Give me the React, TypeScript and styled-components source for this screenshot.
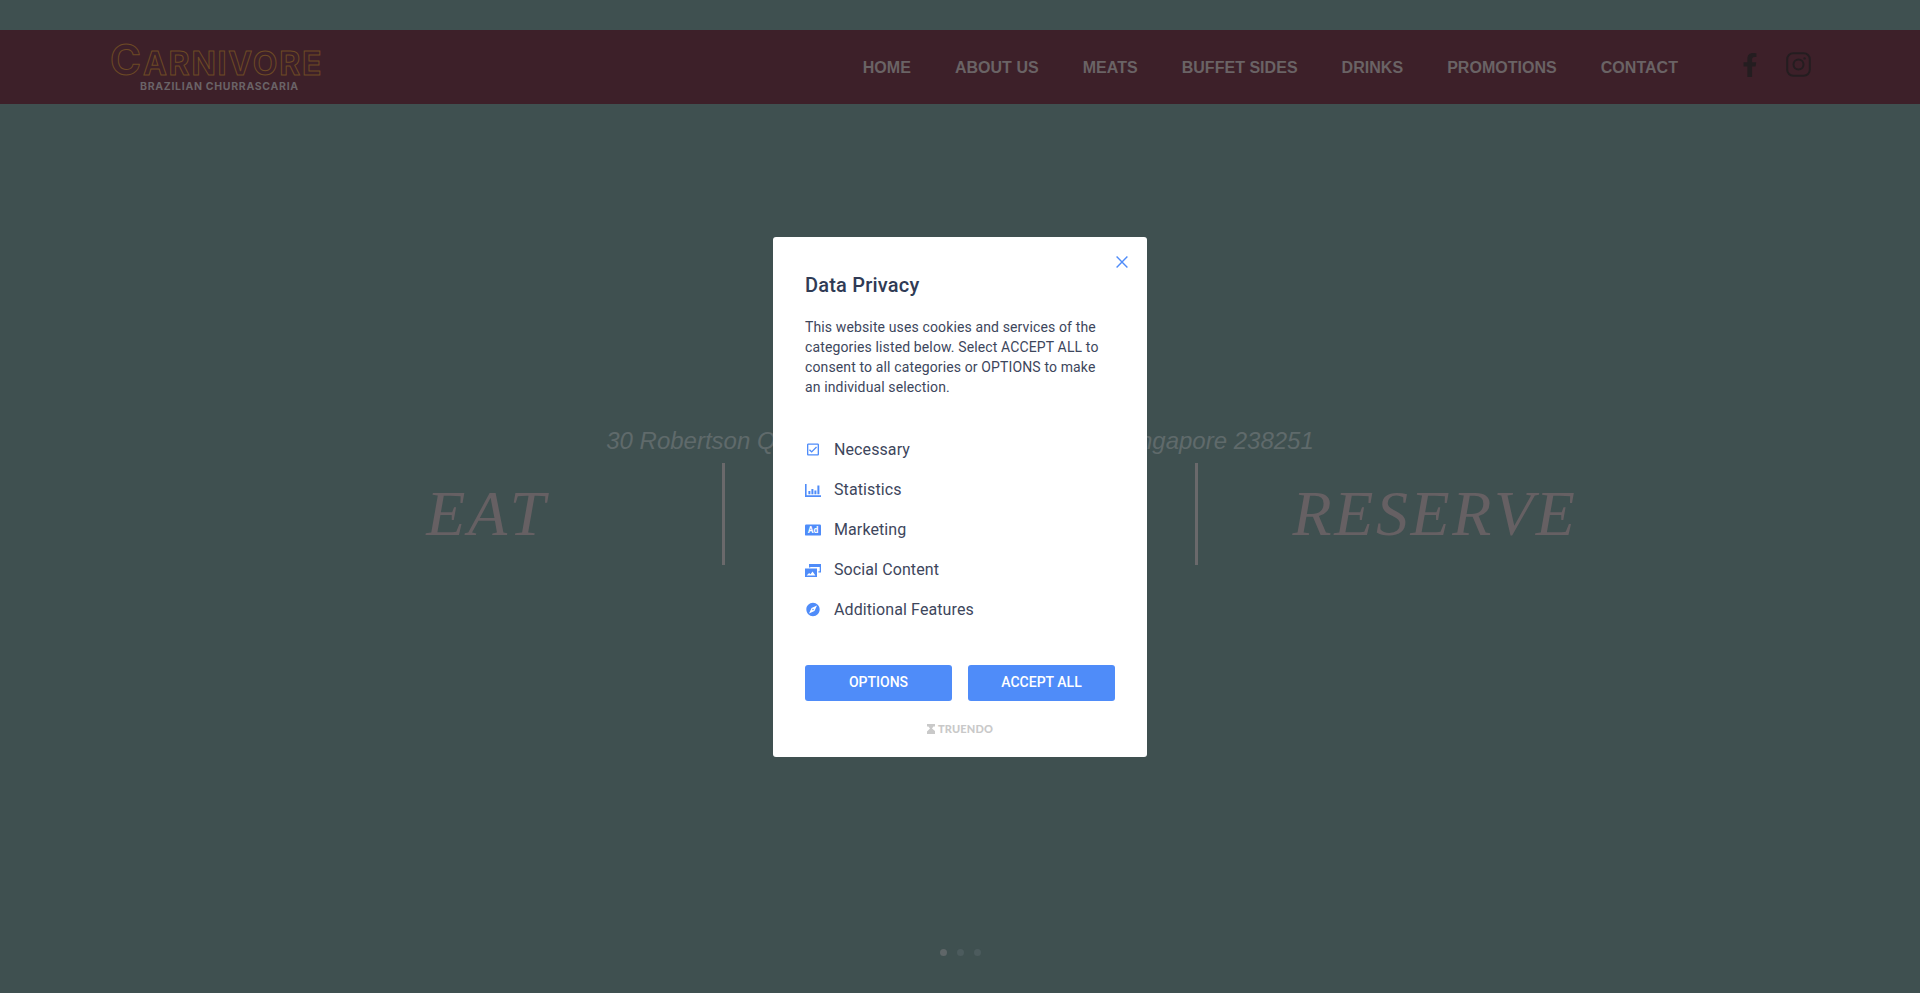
import React, { FC, ReactNode } from 'react';
import styled, { createGlobalStyle } from 'styled-components';
import { MdExplore, MdOutlineCheckBox } from 'react-icons/md';
import { FaFacebookF } from 'react-icons/fa';

const NAV_ITEMS = ['HOME', 'ABOUT US', 'MEATS', 'BUFFET SIDES', 'DRINKS', 'PROMOTIONS', 'CONTACT'];

const StatsIcon = () => (
  <svg width="16" height="16" viewBox="0 0 16 16" fill="#4f8cf9">
    <path d="M0 2h1.6v11.2H16V15H0z" />
    <path d="M3.4 9h2v3.2h-2zM6.4 7h2v5.2h-2zM9.4 8.5h2v3.7h-2zM12.4 3.5h2v8.7h-2z" />
  </svg>
);

const AdIcon = () => (
  <svg width="16" height="16" viewBox="0 0 16 16">
    <rect y="2.4" width="16" height="11.2" rx="1.2" fill="#4f8cf9" />
    <text x="8" y="11.3" textAnchor="middle" fontFamily="Roboto, sans-serif" fontSize="8.5" fontWeight="700" fill="#fff">
      Ad
    </text>
  </svg>
);

const SocialIcon = () => (
  <svg width="16" height="16" viewBox="0 0 16 16" fill="#4f8cf9">
    <path d="M4 2h12v8.5h-2.6V9.2h1.3V5H5.3v.6H4z" />
    <path d="M0 6.5h12V15H0zM1.6 13.4h8.8L7.6 9.6l-2.2 2.6-1.3-1.2z" fillRule="evenodd" />
  </svg>
);

const InstagramIcon = () => (
  <svg width="25" height="25" viewBox="0 0 25 25" fill="none" stroke="#241d20" strokeWidth="2">
    <rect x="1.2" y="1.2" width="22.6" height="22.6" rx="6" />
    <circle cx="12.5" cy="12.5" r="5" />
    <circle cx="18.6" cy="6.4" r="1.2" fill="#241d20" stroke="none" />
  </svg>
);

const TruendoMark = () => (
  <svg width="8" height="10" viewBox="0 0 8 10" fill="#c9c9c9">
    <path d="M0 0h8v2.6H6.4L5 4.4 8 7v3H0V7.4l3-2.8L1.4 2.6H0z" />
  </svg>
);

const CATEGORIES: { label: string; icon: ReactNode }[] = [
  { label: 'Necessary', icon: <MdOutlineCheckBox size={19} color="#4f8cf9" /> },
  { label: 'Statistics', icon: <StatsIcon /> },
  { label: 'Marketing', icon: <AdIcon /> },
  { label: 'Social Content', icon: <SocialIcon /> },
  { label: 'Additional Features', icon: <MdExplore size={17} color="#4f8cf9" /> },
];

const ConsentDialog: FC = () => (
  <Overlay>
    <Dialog>
      <CloseButton aria-label="Close">
        <svg width="12" height="12" viewBox="0 0 12 12" stroke="#4f8cf9" strokeWidth="1.4" fill="none">
          <path d="M.6.6l10.8 10.8M11.4.6L.6 11.4" />
        </svg>
      </CloseButton>
      <Title>Data Privacy</Title>
      <Intro>
        This website uses cookies and services of the categories listed below. Select ACCEPT ALL to consent to all
        categories or OPTIONS to make an individual selection.
      </Intro>
      <CategoryList>
        {CATEGORIES.map(({ label, icon }) => (
          <CategoryRow key={label}>
            <IconSlot>{icon}</IconSlot>
            {label}
          </CategoryRow>
        ))}
      </CategoryList>
      <Actions>
        <ActionButton>OPTIONS</ActionButton>
        <ActionButton>ACCEPT ALL</ActionButton>
      </Actions>
      <Brand>
        <TruendoMark />
        TRUENDO
      </Brand>
    </Dialog>
  </Overlay>
);

export default function App() {
  return (
    <Page>
      <GlobalStyle />
      <Header>
        <Logo>
          <LogoWord>
            <LogoInitial>C</LogoInitial>ARNIVORE
          </LogoWord>
          <LogoTag>BRAZILIAN CHURRASCARIA</LogoTag>
        </Logo>
        <Nav>
          {NAV_ITEMS.map((item) => (
            <NavLink key={item}>{item}</NavLink>
          ))}
        </Nav>
        <Social>
          <FaFacebookF size={24} color="#241d20" />
          <InstagramIcon />
        </Social>
      </Header>
      <Hero>
        <Address>30 Robertson Quay, #01-05/06, Riverside View, Singapore 238251</Address>
        <Columns>
          <Column>
            <BigWord>EAT</BigWord>
          </Column>
          <Column $divided />
          <Column>
            <BigWord>RESERVE</BigWord>
          </Column>
        </Columns>
        <Dots>
          <Dot $active />
          <Dot />
          <Dot />
        </Dots>
      </Hero>
      <ConsentDialog />
    </Page>
  );
}

const GlobalStyle = createGlobalStyle`
  html, body {
    margin: 0;
    height: 100%;
    overflow: hidden;
    background: #3f5050;
  }
`;

const Page = styled.div`
  height: 993px;
  padding-top: 30px;
  box-sizing: border-box;
  display: flex;
  flex-direction: column;
  background: #3f5050;
  font-family: 'Liberation Sans', Arial, sans-serif;
`;

const Header = styled.header`
  height: 74px;
  flex: none;
  display: flex;
  align-items: center;
  padding: 0 109px 0 110px;
  background: #3d2029;
`;

const Logo = styled.div`
  display: flex;
  flex-direction: column;
  padding-top: 2px;
`;

const LogoWord = styled.div`
  font-family: Inter, 'Liberation Sans', sans-serif;
  font-size: 32px;
  line-height: 32px;
  font-weight: 700;
  letter-spacing: 1.8px;
  color: transparent;
  -webkit-text-stroke: 1px #6d4a25;
`;

const LogoInitial = styled.span`
  font-size: 42px;
`;

const LogoTag = styled.div`
  margin: 1px 0 0 30px;
  font-family: Inter, 'Liberation Sans', sans-serif;
  font-size: 10.5px;
  line-height: 11px;
  font-weight: 700;
  letter-spacing: 0.7px;
  color: #6a6367;
`;

const Nav = styled.nav`
  margin: 1px 0 0 auto;
  display: flex;
  gap: 44px;
`;

const NavLink = styled.a`
  font-size: 16px;
  font-weight: 700;
  letter-spacing: 0.03px;
  color: #6a6365;
`;

const Social = styled.div`
  display: flex;
  align-items: center;
  gap: 24px;
  margin: -5px 0 0 60px;
`;

const Hero = styled.main`
  flex: 1;
  display: flex;
  flex-direction: column;
  align-items: center;
  padding-top: 323px;
`;

const Address = styled.p`
  margin: 0;
  font-size: 24px;
  line-height: 28px;
  font-style: italic;
  white-space: nowrap;
  color: #5f6a6b;
`;

const Columns = styled.div`
  margin-top: 8px;
  display: grid;
  grid-template-columns: 472px 476px 472px;
`;

const Column = styled.div<{ $divided?: boolean }>`
  height: 102px;
  padding-left: ${({ $divided }) => ($divided ? '0' : '2px')};
  display: flex;
  align-items: center;
  justify-content: center;
  border-left: ${({ $divided }) => ($divided ? '3px solid #6a696b' : 'none')};
  border-right: ${({ $divided }) => ($divided ? '3px solid #6a696b' : 'none')};
`;

const BigWord = styled.span`
  font-family: 'Liberation Serif', 'Times New Roman', serif;
  font-size: 64px;
  font-style: italic;
  font-kerning: none;
  letter-spacing: 2.6px;
  color: #666063;
`;

const Dots = styled.div`
  margin-top: auto;
  padding-bottom: 37px;
  display: flex;
  gap: 10px;
`;

const Dot = styled.span<{ $active?: boolean }>`
  width: 7px;
  height: 7px;
  border-radius: 50%;
  background: ${({ $active }) => ($active ? '#5f6668' : '#4c5b5d')};
`;

const Overlay = styled.div`
  position: fixed;
  inset: 0;
  display: flex;
  align-items: center;
  justify-content: center;
`;

const Dialog = styled.section`
  position: relative;
  width: 374px;
  height: 520px;
  box-sizing: border-box;
  padding: 36px 32px 20px;
  background: #fff;
  border-radius: 3px;
  font-family: Roboto, 'Liberation Sans', sans-serif;
`;

const CloseButton = styled.button`
  position: absolute;
  top: 19px;
  right: 19px;
  padding: 0;
  display: flex;
  border: 0;
  background: none;
`;

const Title = styled.h2`
  margin: 0;
  font-size: 20px;
  line-height: 24px;
  font-weight: 500;
  letter-spacing: 0.2px;
  color: #303b55;
`;

const Intro = styled.p`
  margin: 20px 0 0;
  padding-right: 6px;
  font-size: 14px;
  line-height: 20px;
  letter-spacing: 0.13px;
  color: #3d465c;
`;

const CategoryList = styled.div`
  margin-top: 33px;
`;

const CategoryRow = styled.div`
  height: 40px;
  display: flex;
  align-items: center;
  font-size: 16px;
  letter-spacing: 0.1px;
  color: #3d465c;
`;

const IconSlot = styled.span`
  width: 16px;
  margin-right: 13px;
  display: flex;
  justify-content: center;
`;

const Actions = styled.div`
  margin-top: 35px;
  display: flex;
  gap: 16px;
`;

const ActionButton = styled.button`
  flex: 1;
  height: 36px;
  padding: 0 0 1px;
  border: 0;
  border-radius: 3px;
  background: #4f8cf9;
  color: #fff;
  font-family: inherit;
  font-size: 14px;
  font-weight: 500;
`;

const Brand = styled.div`
  margin-top: 20px;
  height: 16px;
  display: flex;
  align-items: center;
  justify-content: center;
  gap: 3px;
  font-family: Lato, sans-serif;
  font-size: 11px;
  font-weight: 900;
  letter-spacing: 0.15px;
  color: #c9c9c9;
`;
